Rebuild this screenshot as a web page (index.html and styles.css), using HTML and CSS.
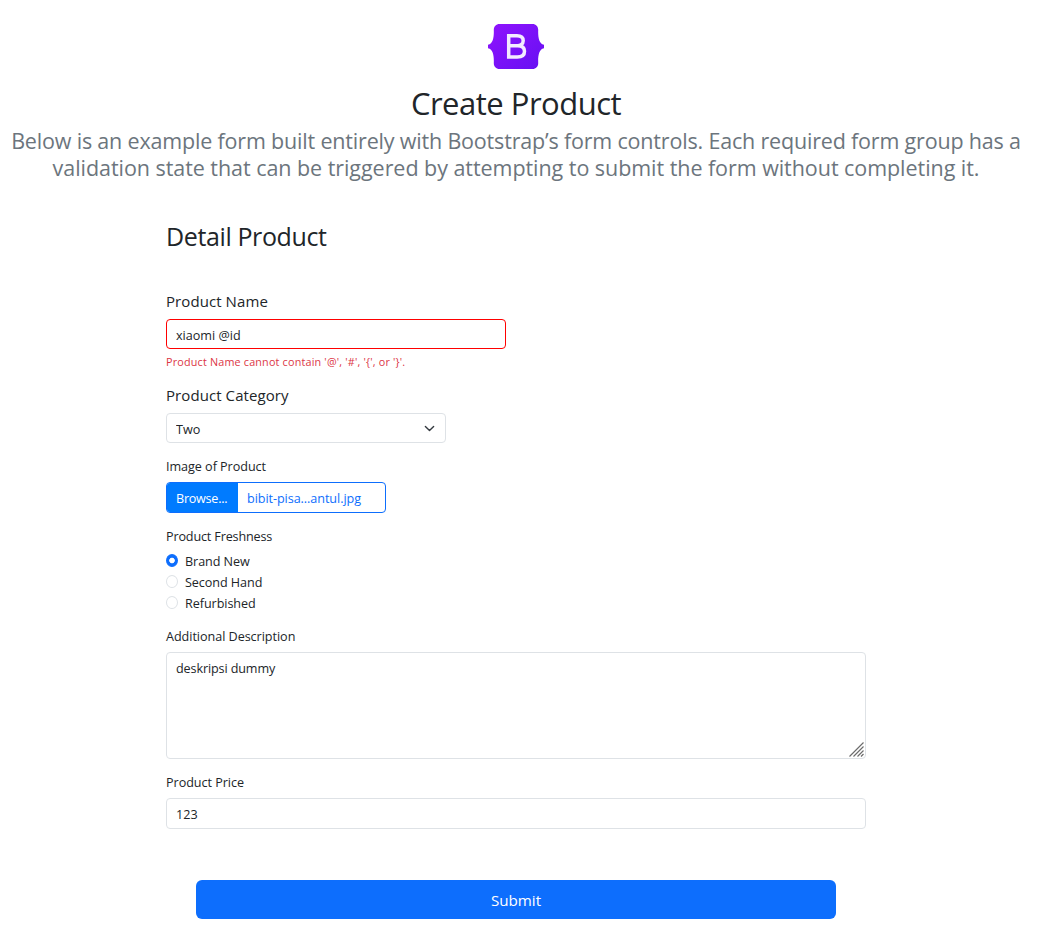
FILE: index.html
```
<!DOCTYPE html>
<html lang="en">
<head>
<meta charset="utf-8">
<title>Create Product</title>
<link rel="stylesheet" href="styles.css">
</head>
<body>
<main class="page">
  <header class="intro">
    <svg class="logo" width="56" height="45" viewBox="0 0 56 45">
      <defs><linearGradient id="lg" x1="0" y1="0" x2="1" y2="1"><stop offset="0" stop-color="#9013fe"/><stop offset="1" stop-color="#6610f2"/></linearGradient></defs>
      <path fill="url(#lg)" d="M11.500 0h33C48 0 50.300 2.800 50.200 6c-.2 6 .3 13.800 5.800 14.700v3.600c-5.500.9-6 8.700-5.800 14.700.1 3.200-2.200 6-5.700 6h-33C8 45 5.700 42.200 5.800 39c.2-6-.3-13.800-5.800-14.700v-3.600C5.500 19.800 6 12 5.800 6 5.700 2.800 8 0 11.500 0z"/>
      <path fill="none" stroke="#f3ebff" stroke-width="3.500" d="M20.700 11.800h8.300c3.900 0 6.200 1.900 6.200 5 0 3-2.400 4.900-5.900 4.900h-8.600 9c4.300 0 6.800 2.100 6.800 5.600 0 3.800-2.700 5.800-7.200 5.800h-8.600z"/>
    </svg>
    <h1 class="title">Create Product</h1>
    <p class="lead">Below is an example form built entirely with Bootstrap’s form controls. Each required form group has a<br><span class="lead-end">validation state that can be triggered by attempting to submit the form without completing it.</span></p>
  </header>
  <form class="form">
    <h2 class="heading">Detail Product</h2>
    <div class="group group-name">
      <label class="label label-lg" for="name">Product Name</label>
      <input class="control invalid" id="name" type="text" value="xiaomi @id">
      <p class="error">Product Name cannot contain '@', '#', '{', or '}'.</p>
    </div>
    <div class="group">
      <label class="label label-lg" for="category">Product Category</label>
      <div class="select-wrap">
        <select class="control" id="category"><option>Two</option></select>
        <svg class="chevron" width="11" height="11" viewBox="0 0 16 16"><path fill="none" stroke="#343a40" stroke-width="2" stroke-linecap="round" stroke-linejoin="round" d="m2 5 6 6 6-6"/></svg>
      </div>
    </div>
    <div class="group">
      <span class="label label-sm">Image of Product</span>
      <div class="file"><span class="file-button">Browse...</span><span class="file-name">bibit-pisa...antul.jpg</span></div>
    </div>
    <div class="group group-fresh">
      <span class="label label-sm">Product Freshness</span>
      <label class="radio"><input class="dot" type="radio" name="fresh" checked><span>Brand New</span></label>
      <label class="radio"><input class="dot" type="radio" name="fresh"><span>Second Hand</span></label>
      <label class="radio"><input class="dot" type="radio" name="fresh"><span>Refurbished</span></label>
    </div>
    <div class="group">
      <label class="label label-sm" for="desc">Additional Description</label>
      <div class="area-wrap">
        <textarea class="control area" id="desc">deskripsi dummy</textarea>
        <svg class="grip" width="15" height="15" viewBox="0 0 15 15"><path fill="none" stroke="#6c6c6c" stroke-width="1.200" d="M.5 14.500l14-14M4.500 14.500l10-10M8.500 14.500l6-6M12 14.500l2.500-2.500"/></svg>
      </div>
    </div>
    <div class="group">
      <label class="label label-sm" for="price">Product Price</label>
      <input class="control price" id="price" type="text" value="123">
    </div>
    <button class="submit" type="button">Submit</button>
  </form>
</main>
</body>
</html>
```
FILE: styles.css
```
* { box-sizing: border-box; }
body { margin: 0; background: #fff; color: #212529; font-family: "Open Sans", "Noto Sans", sans-serif; }
.page { width: 1032px; padding-top: 24px; }
.intro { display: flex; flex-direction: column; align-items: center; text-align: center; }
.logo { display: block; margin-bottom: 15px; }
.title { margin: 0 0 5px; font-size: 31px; font-weight: 400; line-height: 38px; letter-spacing: -0.5px; }
.lead { margin: 0; font-size: 21.500px; line-height: 27px; color: #6c757d; white-space: nowrap; letter-spacing: -0.18px; }
.lead-end { letter-spacing: -0.050px; }
.form { display: flex; flex-direction: column; width: 700px; margin: 40px auto 0; }
.heading { margin: 0 0 38px; font-size: 25px; font-weight: 400; line-height: 30px; letter-spacing: -0.38px; }
.group { display: flex; flex-direction: column; align-items: flex-start; margin-bottom: 13px; font-size: 12.600px; }
.label { margin-bottom: 6px; line-height: 20px; }
.label-lg { font-size: 15px; line-height: 24px; letter-spacing: 0.080px; }
.label-sm { padding-top: 1px; margin-bottom: 5px; letter-spacing: -0.040px; }
.control { display: block; width: 100%; height: 30px; margin: 0; padding: 2px 9px 0; border: 1px solid #dee2e6; border-radius: 4px; background: #fff; color: #212529; font: inherit; outline: 0; }
.invalid { width: 340px; border-color: #f00; }
.error { margin: 5px 0 0; font-size: 10.800px; line-height: 16px; letter-spacing: 0.180px; color: #dc3545; }
.select-wrap { position: relative; width: 280px; }
.select-wrap .control { appearance: none; }
.chevron { position: absolute; right: 11px; top: 9.500px; }
.file { display: flex; width: 220px; height: 31px; border: 1px solid #0d6efd; border-radius: 4px; overflow: hidden; line-height: 31px; }
.file-button { width: 71px; padding-left: 9px; background: #007bff; color: #fff; letter-spacing: -0.250px; }
.file-name { padding-left: 9px; color: #0d6efd; letter-spacing: -0.060px; }
.group-fresh { margin-bottom: 12px; }
.group-fresh .label { margin-bottom: 4px; letter-spacing: -0.150px; }
.radio { display: flex; align-items: center; gap: 7px; height: 21px; line-height: 21px; letter-spacing: -0.060px; }
.dot { appearance: none; width: 12px; height: 13px; margin: 0 0 2px; border: 1px solid #dee2e6; border-radius: 50%; background: #fff; }
.dot:checked { border-color: #0d6efd; background: radial-gradient(circle, #fff 2.400px, #0d6efd 3.200px); }
.area-wrap { position: relative; width: 100%; height: 107px; }
.area { height: 107px; padding-top: 6px; line-height: 20px; letter-spacing: -0.120px; resize: none; }
.grip { position: absolute; right: 2px; bottom: 2px; }
.price { height: 31px; }
.submit { align-self: center; width: 640px; height: 39px; margin-top: 38px; padding: 1px 0 0; border: 0; border-radius: 6px; background: #0d6efd; color: #fff; font: inherit; font-size: 15.200px; }
```
